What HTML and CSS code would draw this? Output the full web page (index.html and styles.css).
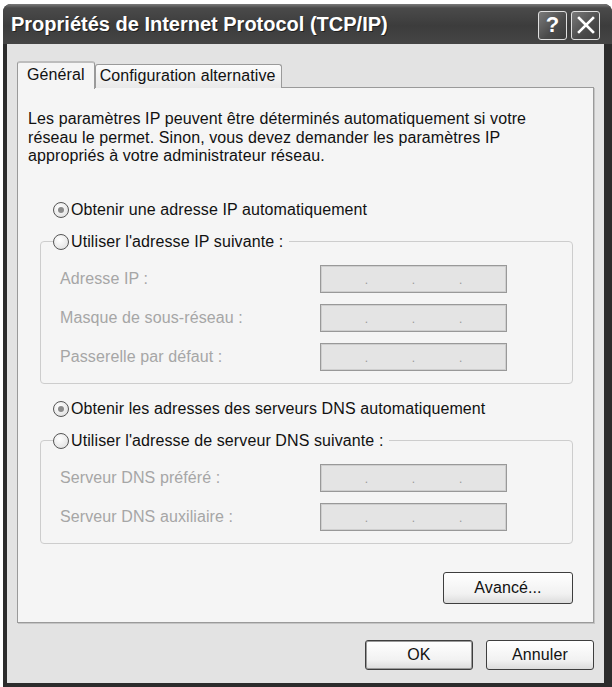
FILE: index.html
```html
<!DOCTYPE html>
<html>
    <head>
        <title>Propriétés de Internet Protocol (TCP/IP)</title>
        <link rel="stylesheet" href="styles.css">
    </head>
    <body>
        <div class="window">
            <div class="titlebar">
                <span class="title">Propriétés de Internet Protocol (TCP/IP)</span>
                <div class="caption-buttons">
                    <div class="caption-btn">?</div>
                    <div class="caption-btn">
                        <svg width="18" height="18" viewBox="0 0 18 18">
                            <path d="M2 2 L16 16 M16 2 L2 16" stroke="#fff" stroke-width="2.6" stroke-linecap="square"/>
                        </svg>
                    </div>
                </div>
            </div>

            <div class="client">
                <div class="tabs">
                    <div class="tab active">Général</div>
                    <div class="tab">Configuration alternative</div>
                </div>

                <div class="page">
                    <p class="intro">Les paramètres IP peuvent être déterminés automatiquement si votre<br>réseau le permet. Sinon, vous devez demander les paramètres IP<br>appropriés à votre administrateur réseau.</p>

                    <div class="radio-row"><span class="radio checked"></span>Obtenir une adresse IP automatiquement</div>
                    <fieldset class="group">
                        <legend><span class="radio"></span>Utiliser l'adresse IP suivante :</legend>
                        <div class="fields">
                            <label>Adresse IP :</label>
                            <div class="ipbox"><span>.</span><span>.</span><span>.</span></div>
                            <label>Masque de sous-réseau :</label>
                            <div class="ipbox"><span>.</span><span>.</span><span>.</span></div>
                            <label>Passerelle par défaut :</label>
                            <div class="ipbox"><span>.</span><span>.</span><span>.</span></div>
                        </div>
                    </fieldset>

                    <div class="radio-row second"><span class="radio checked"></span>Obtenir les adresses des serveurs DNS automatiquement</div>
                    <fieldset class="group">
                        <legend><span class="radio"></span>Utiliser l'adresse de serveur DNS suivante :</legend>
                        <div class="fields">
                            <label>Serveur DNS préféré :</label>
                            <div class="ipbox"><span>.</span><span>.</span><span>.</span></div>
                            <label>Serveur DNS auxiliaire :</label>
                            <div class="ipbox"><span>.</span><span>.</span><span>.</span></div>
                        </div>
                    </fieldset>

                    <div class="page-footer">
                        <div class="btn advanced">Avancé...</div>
                    </div>
                </div>

                <div class="dialog-footer">
                    <div class="btn default">OK</div>
                    <div class="btn">Annuler</div>
                </div>
            </div>
        </div>
    </body>
</html>
```

FILE: styles.css
```css
*{
    box-sizing: border-box;
}

body{
    margin: 0;
    background: #fff;
    font-family: "Liberation Sans", Arial, sans-serif;
    font-size: 16px;
    letter-spacing: 0.1px;
    color: #111;
}

.window{
    margin: 4px 0 0 3px;
    width: 609px;
    height: 683px;
    display: flex;
    flex-direction: column;
    background: #2c2c2c;
    border-radius: 8px 8px 0 0;
    overflow: hidden;
}

.titlebar{
    height: 40px;
    flex: none;
    display: flex;
    align-items: center;
    justify-content: space-between;
    padding: 0 12px 0 8px;
    background: linear-gradient(#7a7a7a, #4a4a4a 10%, #3c3c3c 55%, #454545);
    color: #fff;
}

.title{
    font-weight: bold;
    font-size: 20px;
    letter-spacing: 0;
    text-shadow: 1px 1px 0 #222;
}

.caption-buttons{
    display: flex;
    gap: 4px;
    padding-top: 2px;
}

.caption-btn{
    width: 29px;
    height: 29px;
    border: 1px solid #e0e0e0;
    border-radius: 3px;
    background: linear-gradient(135deg, #7a7a7a, #4a4a4a 60%, #3e3e3e);
    color: #fff;
    font-weight: bold;
    font-size: 22px;
    display: flex;
    align-items: center;
    justify-content: center;
}

.client{
    flex: 1;
    margin: 0 8px 4px 4px;
    background: #e3e3e3;
    padding: 16px 10px 0 10px;
}

.tabs{
    display: flex;
    align-items: flex-end;
    height: 28px;
}

.tab{
    height: 24px;
    line-height: 22px;
    padding: 0 5px 0 4px;
    border: 1px solid #9a9a9a;
    border-bottom: 0;
    border-radius: 3px 3px 0 0;
    background: linear-gradient(#fbfbfb, #e9e9e9);
}

.tab.active{
    height: 28px;
    line-height: 24px;
    padding: 0 9px;
    background: #f5f5f5;
    border-top: 2px solid #bdbdbd;
    position: relative;
    top: 1px;
    z-index: 1;
}

.page{
    height: 536px;
    margin-top: -1px;
    border: 1px solid #9a9a9a;
    background: #f5f5f5;
    box-shadow: 1px 1px 0 #c4c4c4;
    padding: 22px 20px 18px 10px;
    display: flex;
    flex-direction: column;
}

.intro{
    margin: 0;
    line-height: 18.5px;
}

.radio-row{
    display: flex;
    align-items: center;
    height: 20px;
    margin: 34px 0 0 25px;
}

.radio-row.second{
    margin-top: 15px;
}

.radio{
    width: 16px;
    height: 16px;
    border: 1px solid #555;
    border-radius: 50%;
    background: radial-gradient(circle at 40% 35%, #fff, #e6e6e6 70%, #cfcfcf);
    margin-right: 2px;
    flex: none;
    display: flex;
    align-items: center;
    justify-content: center;
}

.radio.checked::after{
    content: "";
    width: 6px;
    height: 6px;
    border-radius: 50%;
    background: #8a8a8a;
}

.group{
    margin: 12px 0 0 12px;
    padding: 0 0 12px 12px;
    border: 1px solid #cdcdcd;
    border-radius: 4px;
}

.group legend{
    display: flex;
    align-items: center;
    height: 20px;
    padding: 0 6px 0 0;
}

.fields{
    display: grid;
    grid-template-columns: 260px 187px;
    row-gap: 11px;
    padding: 13px 0 0 7px;
}

.fields label{
    color: #a6a6a6;
    line-height: 28px;
}

.ipbox{
    height: 28px;
    border: 1px solid #999;
    box-shadow: inset 0 0 0 1px #cfcfcf;
    background: #e4e4e4;
    display: flex;
    justify-content: space-evenly;
    align-items: flex-end;
    padding-bottom: 6px;
    color: #9a9a9a;
    font-size: 12px;
    line-height: 12px;
}

.page-footer{
    margin-top: auto;
    display: flex;
    justify-content: flex-end;
}

.btn{
    height: 30px;
    width: 108px;
    border: 1px solid #3e3e3e;
    border-radius: 3px;
    background: linear-gradient(#ffffff, #f1f1f1 70%, #dcdcdc);
    display: flex;
    align-items: center;
    justify-content: center;
}

.btn.advanced{
    width: 130px;
    height: 32px;
}

.btn.default{
    box-shadow: inset 0 0 0 1px #9a9a9a;
}

.dialog-footer{
    display: flex;
    justify-content: flex-end;
    gap: 13px;
    margin-top: 17px;
}
```
